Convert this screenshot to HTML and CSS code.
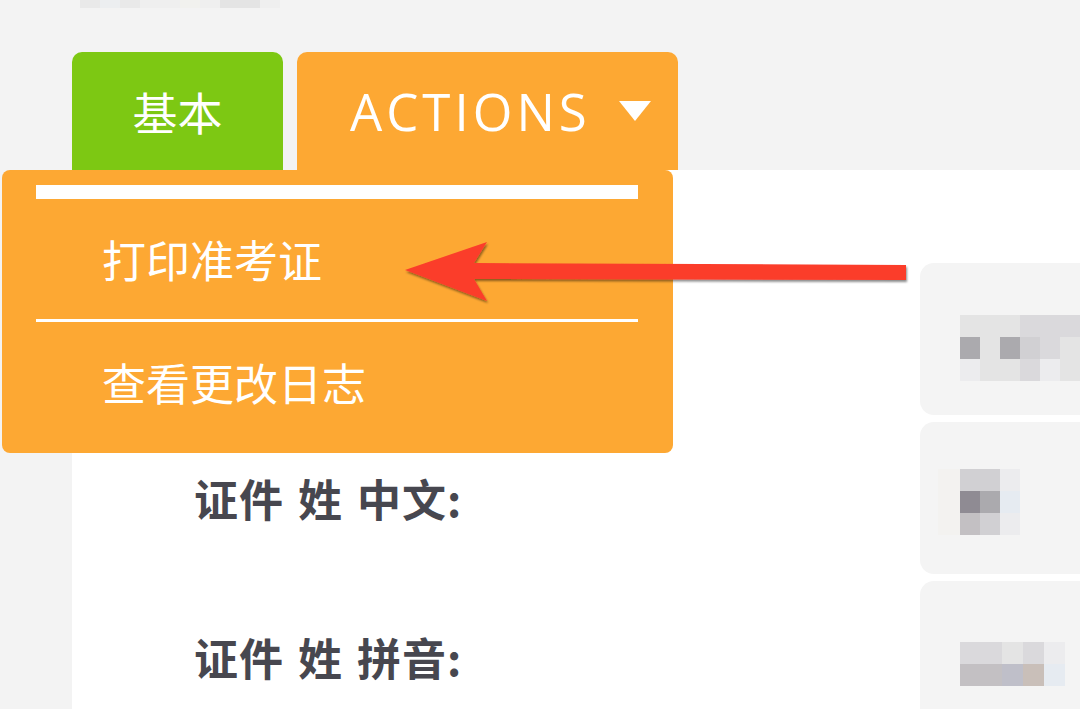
FILE: index.html
```html
<!DOCTYPE html>
<html>
<head>
<meta charset="utf-8">
<title>考生信息</title>
<link rel="stylesheet" href="styles.css">
</head>
<body>

<div class="crumbs">
  <span class="px c1"></span><span class="px c2"></span><span class="px c1"></span><span class="px c3"></span><span class="px c3"></span>
  <span class="px c4"></span><span class="px c3"></span><span class="px c5"></span><span class="px c5"></span><span class="px c3"></span>
</div>

<div class="tabs">
  <div class="tab tab-basic">基本</div>
  <div class="tab tab-actions">ACTIONS<span class="caret"></span></div>
</div>

<div class="panel">
  <div class="row">
    <div class="label"></div>
    <div class="card">
      <div class="blur blur-a">
        <span class="g1"></span><span class="g1"></span><span class="g1"></span><span class="g2"></span><span class="g2"></span><span class="g2"></span>
        <span class="g4"></span><span class="g1"></span><span class="g4"></span><span class="g3"></span><span class="g2"></span><span class="g1"></span>
        <span class="g7"></span><span class="g1"></span><span class="g1"></span><span class="g2"></span><span class="g7"></span><span class="g1"></span>
      </div>
    </div>
  </div>

  <div class="row">
    <div class="label">证件 姓 中文:</div>
    <div class="card">
      <div class="blur blur-b">
        <span class="g8"></span><span class="g3"></span><span class="g3"></span><span class="g7"></span>
        <span class="g8"></span><span class="g5"></span><span class="g4"></span><span class="g9"></span>
        <span class="g8"></span><span class="g6"></span><span class="g3"></span><span class="g7"></span>
      </div>
    </div>
  </div>

  <div class="row">
    <div class="label">证件 姓 拼音:</div>
    <div class="card">
      <div class="blur blur-c">
        <span class="g2"></span><span class="g2"></span><span class="g1"></span><span class="g2"></span><span class="g7"></span>
        <span class="g6"></span><span class="g6"></span><span class="g10"></span><span class="g11"></span><span class="g9"></span>
      </div>
    </div>
  </div>
</div>

<!-- menu of the actions tab, opened -->
<div class="dropdown">
  <div class="dd-bar"></div>
  <div class="dd-item">打印准考证</div>
  <div class="dd-line"></div>
  <div class="dd-item">查看更改日志</div>
</div>

<!-- annotation arrow -->
<svg class="arrow" width="1080" height="709" viewBox="0 0 1080 709">
  <defs>
    <filter id="shadow" x="-5%" y="-30%" width="110%" height="160%">
      <feDropShadow dx="1" dy="2" stdDeviation="1.2" flood-color="#000" flood-opacity="0.45"/>
    </filter>
  </defs>
  <polygon filter="url(#shadow)" fill="#fb3d2c"
    points="405,270 487,242 474,263 906,265 906,280 474,279 487,301"/>
</svg>

</body>
</html>
```

FILE: styles.css
```css
/* styles.css */

body {
  margin: 0;
  height: 709px;
  overflow: hidden;
  background: #f3f3f3;
  font-family: "Noto Sans CJK SC", "Noto Sans", sans-serif;
  position: relative;
}

.crumbs {
  height: 8px;
  padding-left: 80px;
  display: flex;
}
.px {
  width: 20px;
  height: 8px;
}
.c1 { background: #e9e9e9; }
.c2 { background: #eceef0; }
.c3 { background: #efefef; }
.c4 { background: #f1f1ee; }
.c5 { background: #e4e4e4; }

.tabs {
  margin: 44px 0 0 72px;
  display: flex;
  gap: 14px;
  height: 118px;
}
.tab {
  height: 118px;
  display: flex;
  align-items: center;
  color: #fff;
  border-radius: 10px 10px 0 0;
  box-sizing: border-box;
}
.tab-basic {
  width: 211px;
  justify-content: center;
  background: #7dc813;
  font-size: 45px;
}
.tab-actions {
  width: 381px;
  padding-left: 53px;
  background: #fda833;
  font-family: "Open Sans", sans-serif;
  font-size: 51px;
  letter-spacing: 4px;
}
.caret {
  margin-left: 28px;
  width: 0;
  height: 0;
  border-left: 16px solid transparent;
  border-right: 16px solid transparent;
  border-top: 20px solid #fff;
}

.panel {
  margin-left: 72px;
  height: 539px;
  background: #fff;
  box-sizing: border-box;
  padding-top: 93px;
  display: flex;
  flex-direction: column;
  gap: 7px;
}
.row {
  height: 152px;
  flex-shrink: 0;
  display: grid;
  grid-template-columns: 848px 1fr;
}
.label {
  padding-left: 122px;
  display: flex;
  align-items: center;
  font-size: 44px;
  font-weight: bold;
  letter-spacing: 1px;
  word-spacing: 3px;
  color: #47474f;
}
.card {
  background: #f4f4f4;
  border-radius: 14px 0 0 14px;
  display: flex;
  align-items: center;
}

.blur {
  display: grid;
  grid-auto-rows: 22px;
}
.blur-a {
  margin: 18px 0 0 40px;
  grid-template-columns: repeat(6, 20px);
}
.blur-b {
  margin: 8px 0 0 18px;
  grid-template-columns: 22px repeat(3, 20px);
}
.blur-c {
  margin: 14px 0 0 40px;
  grid-template-columns: repeat(5, 21px);
}
.g1 { background: #e4e4e4; }
.g2 { background: #dad9dc; }
.g3 { background: #d1d0d3; }
.g4 { background: #abaaae; }
.g5 { background: #8f8b93; }
.g6 { background: #c3c0c3; }
.g7 { background: #ececee; }
.g8 { background: #f3f2f0; }
.g9 { background: #e6ebf1; }
.g10 { background: #bfbfc9; }
.g11 { background: #c9bfb9; }

.dropdown {
  position: absolute;
  left: 2px;
  top: 170px;
  width: 671px;
  height: 283px;
  box-sizing: border-box;
  padding: 15px 35px 0 34px;
  background: #fda833;
  border-radius: 8px;
}
.dd-bar {
  height: 14px;
  background: #fff;
}
.dd-item {
  height: 120px;
  display: flex;
  align-items: center;
  padding-left: 66px;
  font-size: 44px;
  color: #fff;
}
.dd-line {
  height: 3px;
  background: #fff;
}

.arrow {
  position: absolute;
  left: 0;
  top: 0;
  pointer-events: none;
}
```
